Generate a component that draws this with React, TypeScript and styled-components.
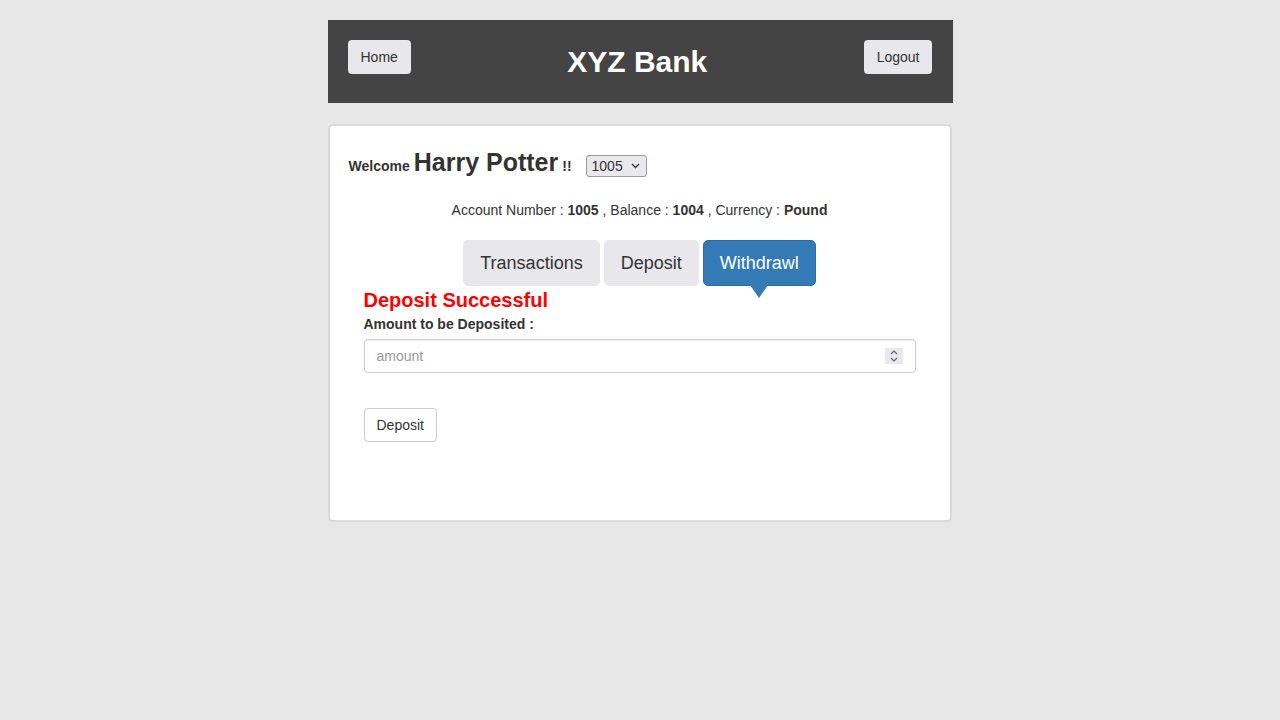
import React, { useState } from "react";
import styled, { createGlobalStyle } from "styled-components";

const GlobalStyle = createGlobalStyle`
  html, body {
    margin: 0;
    padding: 0;
    background: #e7e7e7;
    font-family: "Liberation Sans", Arial, Helvetica, sans-serif;
    color: #333;
    font-size: 14px;
  }
`;

const Page = styled.div`
  width: 625px;
  margin: 0 auto;
  padding-top: 20px;
`;

const Header = styled.header`
  height: 83px;
  background: #444;
  display: flex;
  align-items: flex-start;
  justify-content: space-between;
  padding: 20px 20px 0;
  box-sizing: border-box;
`;

const Brand = styled.strong`
  color: #fff;
  font-size: 30px;
  line-height: 34px;
  margin-top: 5px;
`;

const HeadButton = styled.button`
  font-family: inherit;
  font-size: 14px;
  color: #333;
  background: #e8e8ec;
  border: none;
  border-radius: 4px;
  height: 34px;
  padding: 0 13px;
  cursor: pointer;
`;

const Card = styled.main`
  margin-top: 21px;
  width: 624px;
  height: 398px;
  box-sizing: border-box;
  background: #fff;
  border: 2px solid #dadada;
  border-radius: 5px;
  padding: 0 19px;
`;

const Welcome = styled.div`
  margin-top: 21px;
  font-weight: bold;
  line-height: 30px;
  display: flex;
  align-items: baseline;
`;

const Name = styled.span`
  font-size: 25px;
  margin-left: 4px;
  margin-right: 4px;
`;

const AccountSelect = styled.select`
  margin-left: 14px;
  appearance: none;
  font-family: inherit;
  font-size: 14px;
  color: #333;
  width: 61px;
  height: 22px;
  padding: 0 0 0 5px;
  border: 1px solid #9a9aa4;
  border-radius: 3px;
  background: #e9e9ed
    url("data:image/svg+xml,%3Csvg xmlns='http://www.w3.org/2000/svg' width='9' height='6' viewBox='0 0 9 6'%3E%3Cpath d='M1 1l3.5 3.5L8 1' fill='none' stroke='%23333' stroke-width='1.3'/%3E%3C/svg%3E")
    no-repeat right 6px center;
  align-self: center;
  position: relative;
  top: 2px;
`;

const AccountLine = styled.div`
  text-align: center;
  margin-top: 19px;
  line-height: 20px;

  strong {
    font-weight: bold;
  }
`;

const Tabs = styled.div`
  margin-top: 20px;
  display: flex;
  justify-content: center;
  gap: 4px;
`;

const Tab = styled.button<{ $active?: boolean }>`
  position: relative;
  font-family: inherit;
  font-size: 18px;
  height: 46px;
  padding: 0 16px;
  border-radius: 5px;
  cursor: pointer;
  color: ${(p) => (p.$active ? "#fff" : "#333")};
  background: ${(p) => (p.$active ? "#337ab7" : "#e8e8ec")};
  border: 1px solid ${(p) => (p.$active ? "#2e6da4" : "#e8e8ec")};

  &::after {
    content: "";
    display: ${(p) => (p.$active ? "block" : "none")};
    position: absolute;
    left: 50%;
    bottom: -13px;
    margin-left: -9px;
    border-left: 9px solid transparent;
    border-right: 9px solid transparent;
    border-top: 13px solid #337ab7;
  }
`;

const Form = styled.form`
  padding: 0 15px;
`;

const Message = styled.span`
  display: block;
  color: #f00;
  font-size: 20px;
  font-weight: bold;
  line-height: 26px;
  margin-top: 1px;
`;

const Label = styled.label`
  display: block;
  font-weight: bold;
  line-height: 20px;
  margin-top: 1px;
`;

const InputWrap = styled.div`
  position: relative;
  margin-top: 5px;
`;

const Input = styled.input`
  display: block;
  width: 100%;
  height: 34px;
  box-sizing: border-box;
  padding: 6px 12px;
  font-family: inherit;
  font-size: 14px;
  color: #555;
  border: 1px solid #ccc;
  border-radius: 4px;
  box-shadow: inset 0 1px 1px rgba(0, 0, 0, 0.075);

  &::placeholder {
    color: #999;
  }
`;

const Spinner = styled.span`
  position: absolute;
  right: 13px;
  top: 9px;
  width: 18px;
  height: 16px;
  background: #e9e9ed;
  display: flex;
  align-items: center;
  justify-content: center;
`;

const SubmitButton = styled.button`
  margin-top: 35px;
  font-family: inherit;
  font-size: 14px;
  color: #333;
  background: #fff;
  border: 1px solid #ccc;
  border-radius: 4px;
  height: 34px;
  padding: 0 12px;
`;

export default function App() {
  const [amount, setAmount] = useState("");
  const tabs = ["Transactions", "Deposit", "Withdrawl"];

  return (
    <>
      <GlobalStyle />
      <Page>
        <Header>
          <HeadButton>Home</HeadButton>
          <Brand>XYZ Bank</Brand>
          <HeadButton>Logout</HeadButton>
        </Header>

        <Card>
          <Welcome>
            Welcome <Name>Harry Potter</Name> !!
            <AccountSelect defaultValue="1005">
              <option value="1004">1004</option>
              <option value="1005">1005</option>
              <option value="1006">1006</option>
            </AccountSelect>
          </Welcome>

          <AccountLine>
            Account Number : <strong>1005</strong> , Balance : <strong>1004</strong> ,
            Currency : <strong>Pound</strong>
          </AccountLine>

          <Tabs>
            {tabs.map((t) => (
              <Tab key={t} $active={t === "Withdrawl"}>
                {t}
              </Tab>
            ))}
          </Tabs>

          <Form onSubmit={(e) => e.preventDefault()}>
            <Message>Deposit Successful</Message>
            <Label>Amount to be Deposited :</Label>
            <InputWrap>
              <Input
                placeholder="amount"
                value={amount}
                onChange={(e) => setAmount(e.target.value)}
              />
              <Spinner>
                <svg width="8" height="12" viewBox="0 0 8 12">
                  <path d="M1 4l3-3 3 3M1 8l3 3 3-3" fill="none" stroke="#666" strokeWidth="1.2" />
                </svg>
              </Spinner>
            </InputWrap>
            <SubmitButton type="submit">Deposit</SubmitButton>
          </Form>
        </Card>
      </Page>
    </>
  );
}
